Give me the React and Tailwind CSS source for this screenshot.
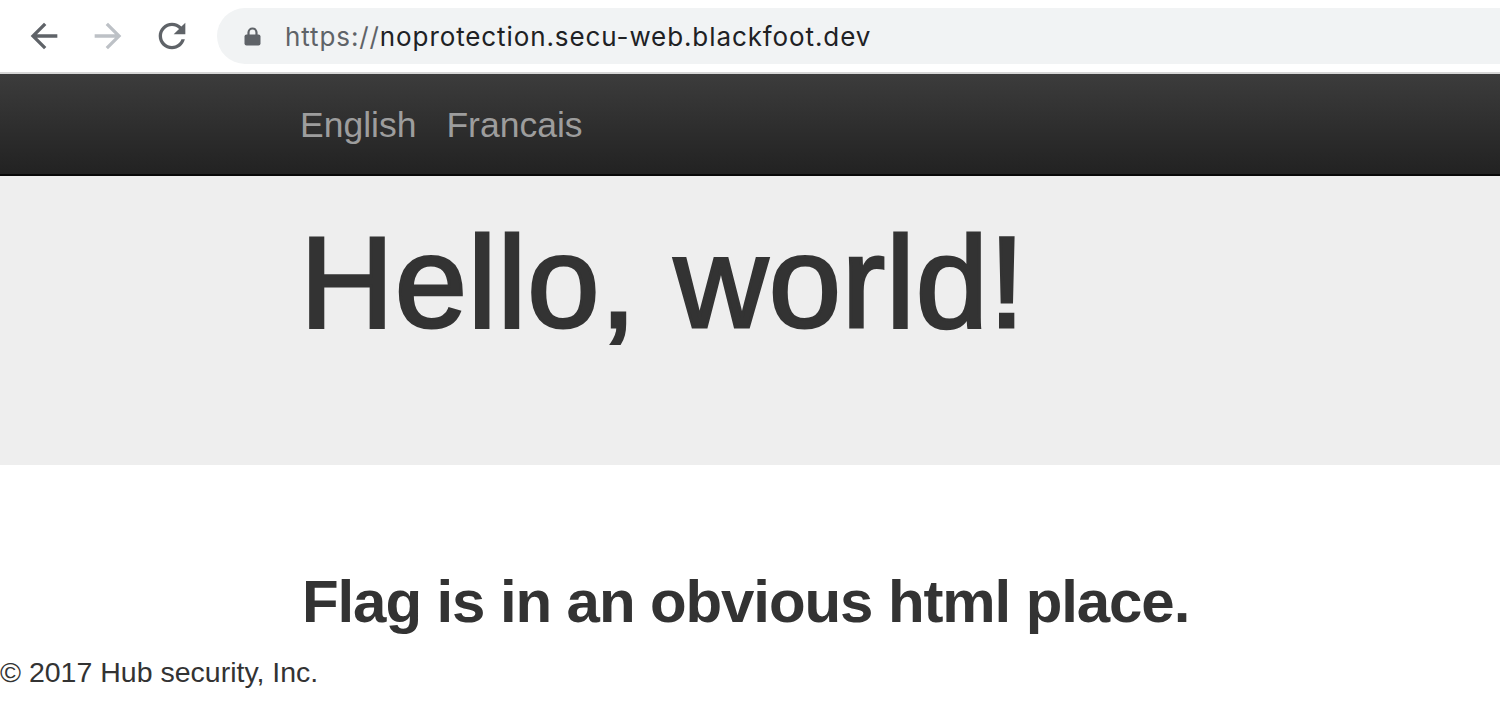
export default function App() {
  return (
    <div className="w-[1500px] h-[720px] overflow-hidden bg-white text-[#333]" style={{ fontFamily: '"Liberation Sans", Arial, sans-serif' }}>
      {/* browser chrome */}
      <div className="flex items-center h-[72px] pl-[24px]">
        <div className="flex items-center gap-[24px]">
          <svg width="40" height="40" viewBox="0 0 24 24" fill="#5f6368">
            <path d="M20 11H7.83l5.59-5.59L12 4l-8 8 8 8 1.41-1.41L7.83 13H20v-2z" />
          </svg>
          <svg width="40" height="40" viewBox="0 0 24 24" fill="#bdc1c6">
            <path d="M12 4l-1.41 1.41L16.17 11H4v2h12.17l-5.58 5.59L12 20l8-8z" />
          </svg>
          <svg width="40" height="40" viewBox="0 0 24 24" fill="#5f6368">
            <path d="M17.65 6.35C16.2 4.9 14.21 4 12 4c-4.42 0-7.99 3.58-7.99 8s3.57 8 7.99 8c3.73 0 6.84-2.55 7.73-6h-2.08c-.82 2.33-3.04 4-5.65 4-3.31 0-6-2.69-6-6s2.69-6 6-6c1.66 0 3.14.69 4.22 1.78L13 11h7V4l-2.35 2.35z" />
          </svg>
        </div>
        <div className="flex items-center flex-1 h-[56px] ml-[25px] -mr-[60px] pl-[27px] rounded-full bg-[#f1f3f4]">
          <svg width="17" height="19" viewBox="0 0 17 19">
            <path d="M4.5 8V5.5a4 4 0 0 1 8 0V8" fill="none" stroke="#5f6368" strokeWidth="2.2" />
            <rect x="0.5" y="7.5" width="16" height="11" rx="2" fill="#5f6368" />
          </svg>
          <span className="ml-[24px] text-[26px] tracking-[0.9px] text-[#202124]" style={{ fontFamily: 'Inter, "Liberation Sans", sans-serif' }}>
            <span className="text-[#5f6368]">https://</span>noprotection.secu-web.blackfoot.dev
          </span>
        </div>
      </div>
      <div className="h-[2px] bg-[#d6d6d6]" />

      {/* navbar */}
      <div className="h-[102px] pt-[33px] pl-[300px] bg-gradient-to-b from-[#3c3c3c] to-[#222222] border-b-2 border-[#080808]">
        <nav className="flex gap-[30px] text-[35.5px] leading-[36px] text-[#9d9d9d]">
          <a>English</a>
          <a>Francais</a>
        </nav>
      </div>

      {/* jumbotron */}
      <div className="bg-[#eeeeee] pl-[300px] pt-[41px] pb-[118px]">
        <h1 className="text-[130px] leading-[130px] font-normal tracking-[0.8px] [-webkit-text-stroke-width:3px] [-webkit-text-stroke-color:#333]">Hello, world!</h1>
      </div>

      <div className="pl-[302px] pt-[104px]">
        <h2 className="text-[60px] leading-[66px] font-bold tracking-[-1.1px]">Flag is in an obvious html place.</h2>
      </div>

      <footer className="pt-[17px] text-[28.5px] leading-[40px]">© 2017 Hub security, Inc.</footer>
    </div>
  );
}
